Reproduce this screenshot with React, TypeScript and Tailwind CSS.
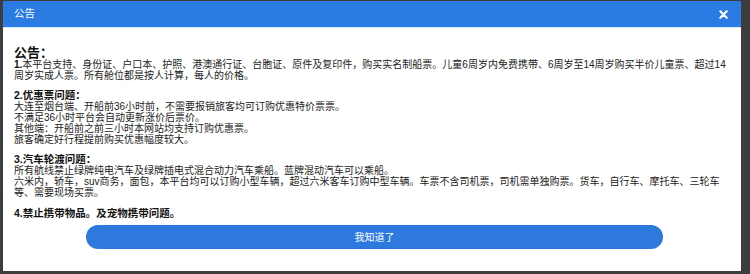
import { useState } from "react";

const bodyFont = { fontFamily: '"Liberation Sans", "Noto Sans CJK SC", sans-serif' };

function CloseIcon() {
  return (
    <svg width="9" height="9" viewBox="0 0 10 10" fill="none" stroke="white" strokeWidth="2.4" strokeLinecap="round">
      <path d="M1.5 1.5 L8.5 8.5 M8.5 1.5 L1.5 8.5" />
    </svg>
  );
}

function Line({ children }: { children: React.ReactNode }) {
  return <div className="whitespace-nowrap">{children}</div>;
}

function Heading({ children }: { children: React.ReactNode }) {
  return <div className="whitespace-nowrap text-[10.5px] font-bold leading-[11px] text-[#111]">{children}</div>;
}

function App() {
  const [open, setOpen] = useState(true);

  return (
    <main className="h-[274px] w-[750px] overflow-hidden bg-[#3d3d3d] pl-[3px] pt-[1px]" style={bodyFont}>
      {open && (
        <div className="flex h-[270px] w-[738px] flex-col bg-white">
          <header className="flex h-[27px] shrink-0 items-center justify-between border-b border-[#cfe9ff] bg-[#2a7be2] pl-[11px] pr-[13px]">
            <span className="text-[10.5px] text-white">公告</span>
            <button type="button" onClick={() => setOpen(false)} className="flex items-center">
              <CloseIcon />
            </button>
          </header>

          <section className="flex flex-col gap-[9px] px-[11px] pt-[18px] text-[10px] leading-[11px] text-[#222]">
            <div>
              <div className="text-[13px] font-bold leading-[13px] text-[#111]">公告：</div>
              <Line>
                <span className="font-bold text-[#111]">1.</span>
                本平台支持、身份证、户口本、护照、港澳通行证、台胞证、原件及复印件，购买实名制船票。儿童6周岁内免费携带、6周岁至14周岁购买半价儿童票、超过14
              </Line>
              <Line>周岁实成人票。所有舱位都是按人计算，每人的价格。</Line>
            </div>

            <div>
              <Heading>2.优惠票问题：</Heading>
              <Line>大连至烟台端、开船前36小时前，不需要报销旅客均可订购优惠特价票票。</Line>
              <Line>不满足36小时平台会自动更新涨价后票价。</Line>
              <Line>其他端：开船前之前三小时本网站均支持订购优惠票。</Line>
              <Line>旅客确定好行程提前购买优惠幅度较大。</Line>
            </div>

            <div>
              <Heading>3.汽车轮渡问题：</Heading>
              <Line>所有航线禁止绿牌纯电汽车及绿牌插电式混合动力汽车乘船。蓝牌混动汽车可以乘船。</Line>
              <Line>
                六米内，轿车，suv商务，面包，本平台均可以订购小型车辆，超过六米客车订购中型车辆。车票不含司机票，司机需单独购票。货车，自行车、摩托车、三轮车
              </Line>
              <Line>等、需要现场买票。</Line>
            </div>

            <div className="mt-[1px]">
              <Heading>4.禁止携带物品。及宠物携带问题。</Heading>
            </div>
          </section>

          <button
            type="button"
            onClick={() => setOpen(false)}
            className="ml-[83px] mt-[6px] h-[24px] w-[577px] shrink-0 rounded-full bg-[#2d79de] text-[10px] text-white"
          >
            我知道了
          </button>
        </div>
      )}
    </main>
  );
}

export default App;
